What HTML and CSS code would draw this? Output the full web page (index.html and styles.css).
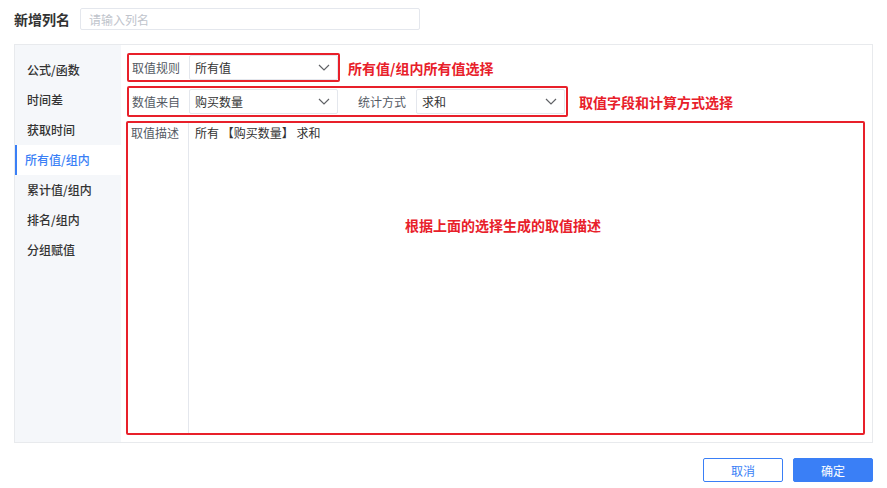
FILE: index.html
```html
<!DOCTYPE html>
<html lang="zh-CN">
<head>
  <meta charset="UTF-8">
  <meta name="viewport" content="width=device-width, initial-scale=1.0">
  <title>新增列名</title>
  <link rel="stylesheet" href="styles.css">
</head>
<body>
  <div class="title-row">
    <span class="title">新增列名</span>
    <input class="name-input" type="text" placeholder="请输入列名">
  </div>

  <div class="panel">
    <ul class="side-menu">
      <li>公式/函数</li>
      <li>时间差</li>
      <li>获取时间</li>
      <li class="active">所有值/组内</li>
      <li>累计值/组内</li>
      <li>排名/组内</li>
      <li>分组赋值</li>
    </ul>

    <div class="content">
      <div class="row">
        <div class="mark">
          <span class="field-label">取值规则</span>
          <div class="select"><span>所有值</span><svg viewBox="0 0 12 7" width="12" height="7"><path d="M1 1l5 5 5-5" fill="none" stroke="#606266" stroke-width="1.2"/></svg></div>
        </div>
        <span class="note">所有值/组内所有值选择</span>
      </div>

      <div class="row">
        <div class="mark mark-tall">
          <span class="field-label">数值来自</span>
          <div class="select"><span>购买数量</span><svg viewBox="0 0 12 7" width="12" height="7"><path d="M1 1l5 5 5-5" fill="none" stroke="#606266" stroke-width="1.2"/></svg></div>
          <span class="field-label field-label-mid">统计方式</span>
          <div class="select"><span>求和</span><svg viewBox="0 0 12 7" width="12" height="7"><path d="M1 1l5 5 5-5" fill="none" stroke="#606266" stroke-width="1.2"/></svg></div>
        </div>
        <span class="note note-wide">取值字段和计算方式选择</span>
      </div>

      <div class="mark desc">
        <span class="field-label desc-label">取值描述</span>
        <div class="desc-text">所有 【购买数量】 求和</div>
        <span class="note desc-note">根据上面的选择生成的取值描述</span>
      </div>
    </div>
  </div>

  <div class="footer">
    <button class="btn btn-plain">取消</button>
    <button class="btn btn-primary">确定</button>
  </div>
</body>
</html>
```

FILE: styles.css
```css
body {
  margin: 0;
  padding: 8px 14px 0 14px;
  background-color: #FFFFFF;
  font-family: 'Noto Sans CJK SC', 'Noto Sans', sans-serif;
  font-size: 12px;
  color: #333333;
}

.title-row {
  display: flex;
  align-items: center;
  height: 22px;
}

.title {
  font-size: 14px;
  font-weight: 700;
  color: #333333;
  width: 66px;
}

.name-input {
  width: 340px;
  height: 22px;
  box-sizing: border-box;
  border: 1px solid #e4e7ed;
  border-radius: 2px;
  padding: 0 8px;
  font-family: inherit;
  font-size: 12px;
  outline: none;
}

.name-input::placeholder {
  color: #c0c4cc;
}

.panel {
  margin-top: 14px;
  height: 399px;
  box-sizing: border-box;
  border: 1px solid #e8eaed;
  display: flex;
}

.side-menu {
  list-style: none;
  margin: 0;
  padding: 10px 0 0 0;
  width: 106px;
  background-color: #f5f7fa;
}

.side-menu li {
  height: 30px;
  line-height: 30px;
  padding-left: 10px;
  font-weight: 500;
  color: #333333;
  border-left: 2px solid transparent;
}

.side-menu li.active {
  background-color: #FFFFFF;
  color: #3a7ff6;
  border-left-color: #3a7ff6;
  padding-left: 8px;
}

.content {
  flex: 1;
  padding: 8px 7px 7px 6px;
  display: flex;
  flex-direction: column;
  gap: 4px;
}

.row {
  display: flex;
  align-items: center;
}

.mark {
  border: 2px solid #e8202a;
  border-radius: 2px;
  display: flex;
  align-items: center;
  height: 29px;
  box-sizing: border-box;
  padding-left: 3px;
}

.mark-tall {
  height: 31px;
  padding-right: 1px;
}

.field-label {
  width: 57px;
  color: #555a64;
}

.field-label-mid {
  width: 58px;
  padding-left: 20px;
}

.select {
  width: 149px;
  height: 25px;
  box-sizing: border-box;
  border: 1px solid #e4e7ed;
  border-radius: 2px;
  padding: 0 7px 0 5px;
  display: flex;
  align-items: center;
  justify-content: space-between;
  color: #333333;
}

.note {
  color: #e8202a;
  font-size: 14px;
  font-weight: 700;
  margin-left: 8px;
}

.note-wide {
  margin-left: 11px;
}

.desc {
  flex: 1;
  margin-left: -1px;
  align-items: stretch;
  position: relative;
  height: auto;
}

.desc-label {
  padding-top: 1px;
  border-right: 1px solid #e4e7ed;
}

.desc-text {
  padding: 1px 0 0 6px;
}

.desc-note {
  position: absolute;
  left: 277px;
  top: 92px;
  margin-left: 0;
}

.footer {
  display: flex;
  justify-content: flex-end;
  gap: 10px;
  margin-top: 15px;
}

.btn {
  width: 80px;
  height: 24px;
  border-radius: 2px;
  font-family: inherit;
  font-size: 12px;
  cursor: pointer;
}

.btn-plain {
  background-color: #FFFFFF;
  border: 1px solid #3a7ff6;
  color: #3a7ff6;
}

.btn-primary {
  background-color: #3a7ff6;
  border: 1px solid #3a7ff6;
  color: #FFFFFF;
}
```
